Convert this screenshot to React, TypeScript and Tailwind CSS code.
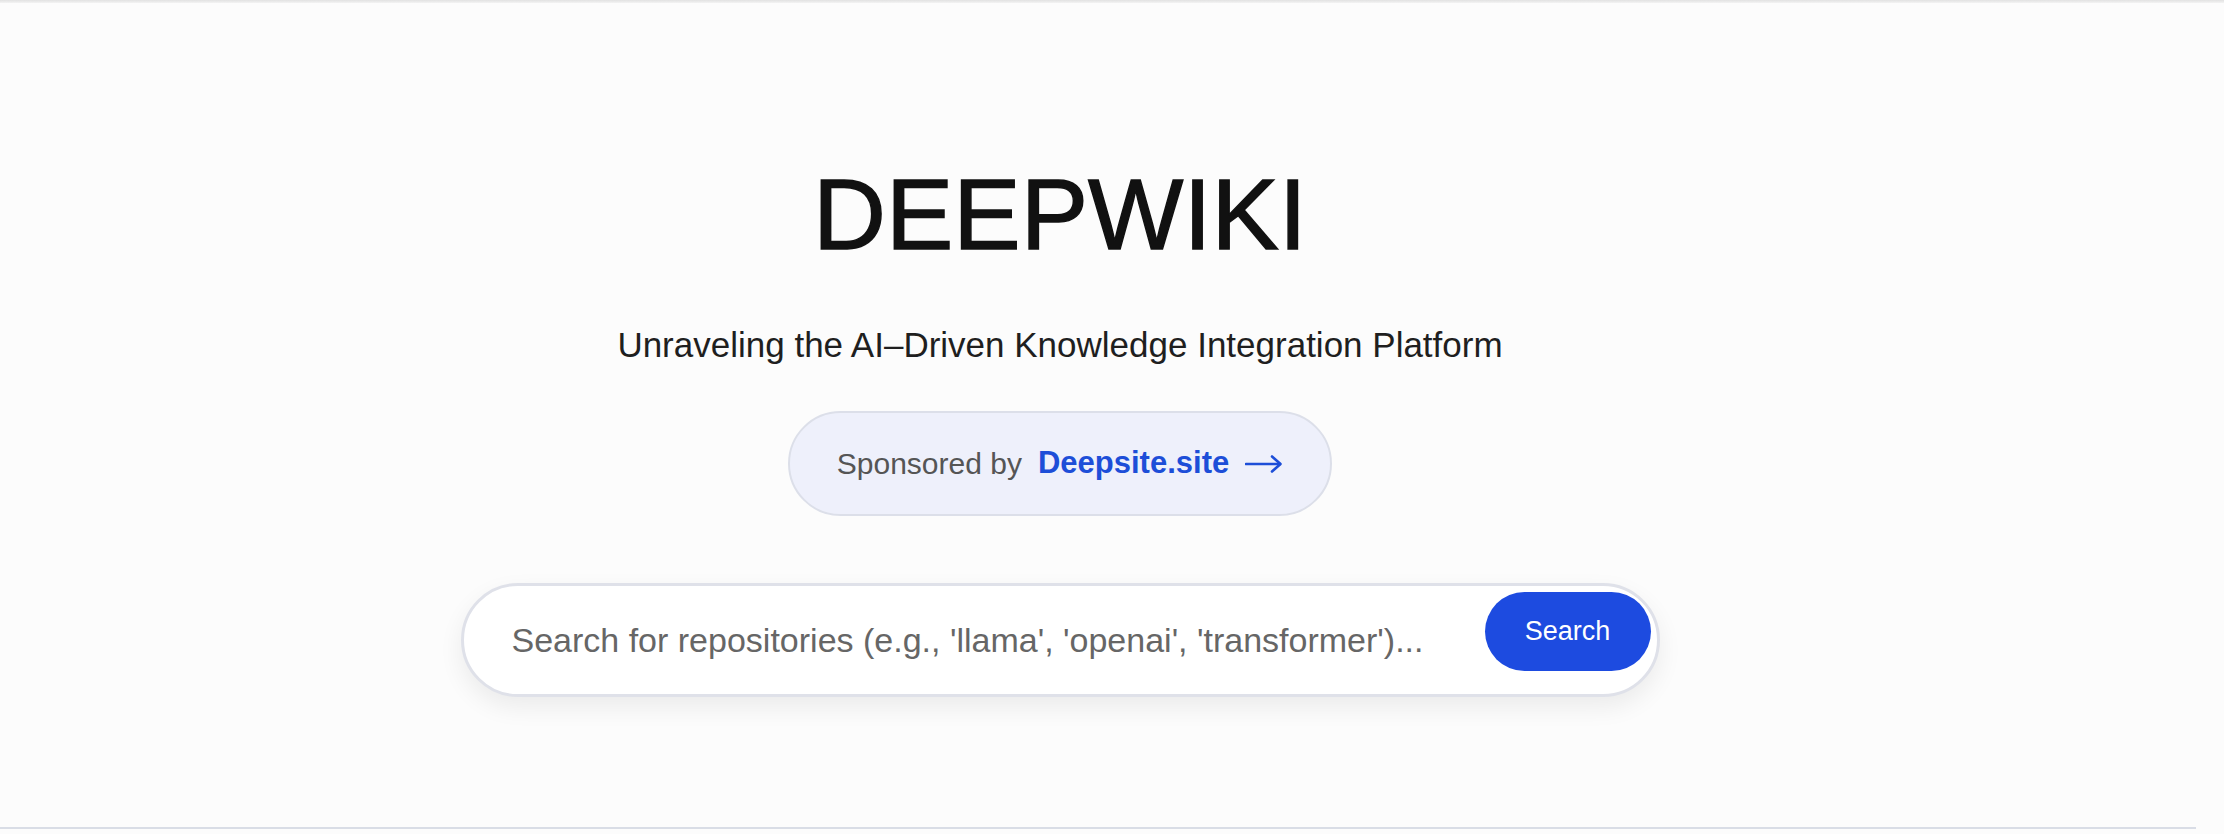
import { useState } from 'react';

function ArrowRight() {
  return (
    <svg width="38" height="20" viewBox="0 0 38 20" fill="none" className="shrink-0">
      <path d="M1 10H35" stroke="#1d4ed8" strokeWidth="2.6" strokeLinecap="round" />
      <path d="M27 2.5L35.5 10L27 17.5" stroke="#1d4ed8" strokeWidth="2.6" strokeLinecap="round" strokeLinejoin="round" />
    </svg>
  );
}

export default function App() {
  const [query, setQuery] = useState('');

  return (
    <div className="w-[2224px] h-[834px] bg-[#fcfcfc] flex flex-col overflow-hidden" style={{ fontFamily: '"Liberation Sans", Arial, sans-serif' }}>
      <div className="h-[3px] bg-gradient-to-b from-[#e2e2e2] to-[#f3f3f3]" />

      <main className="h-[824px] w-[2120px] flex flex-col items-center pt-[161px]">
        <h1 className="text-[101px] leading-none font-medium text-[#111111] [-webkit-text-stroke:1.4px_#111111]">DEEPWIKI</h1>

        <p className="mt-[62px] text-[35px] leading-none text-[#1f1f1f]">
          Unraveling the AI–Driven Knowledge Integration Platform
        </p>

        <a
          href="#"
          className="mt-[49px] h-[105px] flex items-center gap-[16px] px-[47px] rounded-full border-2 border-[#dcdfe9] bg-[#eef0fb]"
        >
          <span className="text-[30px] text-[#555555]">Sponsored by</span>
          <span className="text-[31px] font-bold text-[#1d4ed8]">Deepsite.site</span>
          <ArrowRight />
        </a>

        <div className="mt-[67px] w-[1199px] h-[114px] flex items-start rounded-full border-[3px] border-[#dfe1e9] bg-white shadow-[0_10px_24px_rgba(0,0,0,0.07)]">
          <input
            value={query}
            onChange={(e) => setQuery(e.target.value)}
            placeholder="Search for repositories (e.g., 'llama', 'openai', 'transformer')..."
            className="flex-1 h-full pl-[48px] pr-4 bg-transparent outline-none text-[34px] text-[#222] placeholder:text-[#666666]"
          />
          <button className="mt-[6px] mr-[6px] w-[166px] h-[79px] rounded-full bg-[#1d4be0] text-white text-[27px]">
            Search
          </button>
        </div>
      </main>

      <div className="h-[2px] w-[2196px] bg-[#d9dde6]" />
    </div>
  );
}
